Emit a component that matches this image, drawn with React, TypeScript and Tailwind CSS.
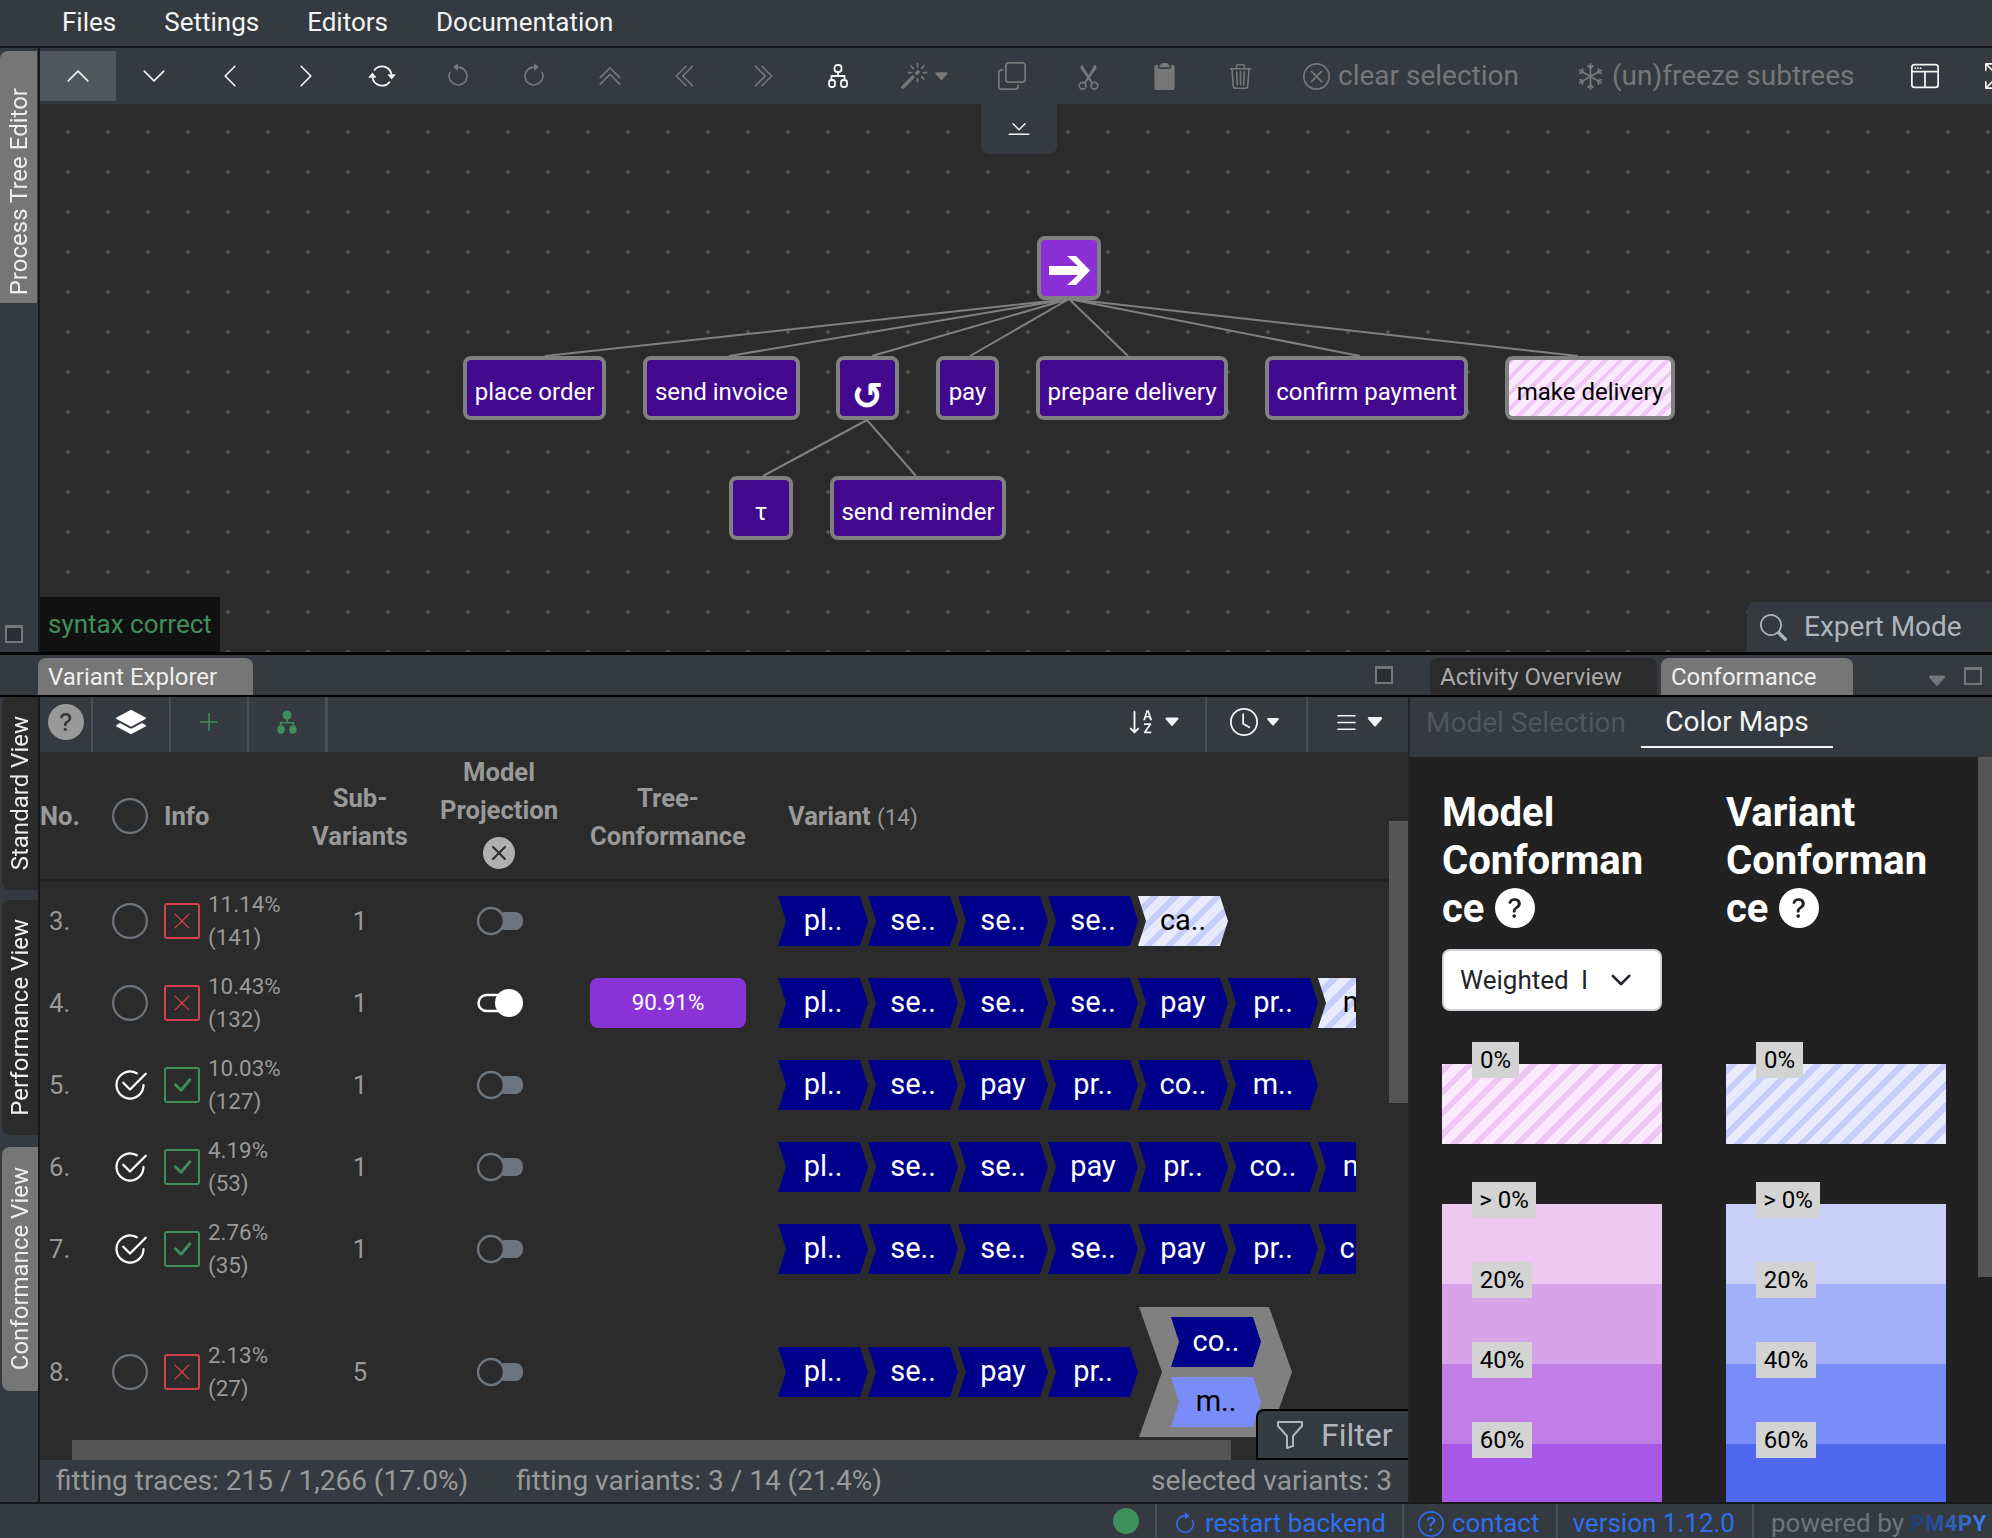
import type { ReactNode } from 'react'
import {
  BsArrowClockwise,
  BsArrowCounterclockwise,
  BsArrowRepeat,
  BsArrowsFullscreen,
  BsCaretDownFill,
  BsCheck2Circle,
  BsCheckLg,
  BsChevronBarDown,
  BsChevronDoubleLeft,
  BsChevronDoubleRight,
  BsChevronDoubleUp,
  BsChevronDown,
  BsChevronLeft,
  BsChevronRight,
  BsChevronUp,
  BsCircle,
  BsClipboard2Fill,
  BsClock,
  BsCopy,
  BsFunnel,
  BsLayersFill,
  BsList,
  BsMagic,
  BsPlusLg,
  BsQuestionCircle,
  BsQuestionLg,
  BsScissors,
  BsSearch,
  BsSnow,
  BsSortAlphaDown,
  BsTrash3,
  BsWindowSplit,
  BsXCircle,
  BsXCircleFill,
  BsXLg,
} from 'react-icons/bs'

const hatchBlue = 'bg-[repeating-linear-gradient(-45deg,#e8ebfd_0px,#e8ebfd_9px,#c5cffa_9px,#c5cffa_15px)]'
const hatchPink = 'bg-[repeating-linear-gradient(-45deg,#fbeafe_0px,#fbeafe_9px,#edc8f2_9px,#edc8f2_15px)]'
const hatchPinkSmall = 'bg-[repeating-linear-gradient(-45deg,#fbeafe_0px,#fbeafe_7px,#edc8f2_7px,#edc8f2_11px)]'

function TreeOutline() {
  return (
    <svg width="20" height="24" viewBox="0 0 20 24" fill="none" stroke="currentColor" strokeWidth="1.8">
      <rect x="6.5" y="1" width="7" height="7" rx="3" />
      <path d="M10 8v4M3.5 15v-3h13v3" />
      <rect x="1" y="16" width="6" height="7" rx="2.5" />
      <rect x="13" y="16" width="6" height="7" rx="2.5" />
    </svg>
  )
}

function TreeFill() {
  return (
    <svg width="20" height="24" viewBox="0 0 20 24" fill="currentColor">
      <circle cx="10" cy="5" r="4.5" />
      <path d="M9.2 8h1.6v4h6.4v3h-1.6v-1.4H4.4V15H2.8v-3h6.4z" />
      <ellipse cx="4" cy="19.5" rx="3.6" ry="4.2" />
      <ellipse cx="16" cy="19.5" rx="3.6" ry="4.2" />
    </svg>
  )
}

function WindowIcon() {
  return <div className="h-[18px] w-[18px] border-2 border-t-[3px] border-[#777777] bg-[#2b2f33]" />
}

function ToolButton({ children, active, dim }: { children: ReactNode; active?: boolean; dim?: boolean }) {
  return (
    <div
      className={`flex h-[50px] w-[76px] shrink-0 items-center justify-center ${active ? 'bg-[#4f565e]' : ''} ${dim ? 'text-[#777777]' : 'text-[#f4f4f4]'}`}
    >
      {children}
    </div>
  )
}

function EditorToolbar() {
  return (
    <div className="flex h-[56px] shrink-0 items-start overflow-hidden bg-[#343a40] pt-[3px]">
      <ToolButton active><BsChevronUp size={26} /></ToolButton>
      <ToolButton><BsChevronDown size={26} /></ToolButton>
      <ToolButton><BsChevronLeft size={26} /></ToolButton>
      <ToolButton><BsChevronRight size={26} /></ToolButton>
      <ToolButton><BsArrowRepeat size={28} /></ToolButton>
      <ToolButton dim><BsArrowCounterclockwise size={26} /></ToolButton>
      <ToolButton dim><BsArrowClockwise size={26} /></ToolButton>
      <ToolButton dim><BsChevronDoubleUp size={26} /></ToolButton>
      <ToolButton dim><BsChevronDoubleLeft size={26} /></ToolButton>
      <ToolButton dim><BsChevronDoubleRight size={26} /></ToolButton>
      <ToolButton><TreeOutline /></ToolButton>
      <div className="flex h-[50px] w-[98px] shrink-0 items-center justify-center gap-[5px] text-[#777777]">
        <BsMagic size={28} />
        <BsCaretDownFill size={17} />
      </div>
      <ToolButton dim><BsCopy size={28} /></ToolButton>
      <ToolButton dim><BsScissors size={27} /></ToolButton>
      <ToolButton dim><BsClipboard2Fill size={27} /></ToolButton>
      <ToolButton dim><BsTrash3 size={25} /></ToolButton>
      <div className="ml-[25px] flex h-[50px] shrink-0 items-center gap-[8px] text-[28px] text-[#777777]">
        <BsXCircle size={27} />
        <span>clear selection</span>
      </div>
      <div className="ml-[58px] flex h-[50px] shrink-0 items-center gap-[8px] text-[28px] text-[#777777]">
        <BsSnow size={27} />
        <span>(un)freeze subtrees</span>
      </div>
      <div className="ml-[56px] flex h-[50px] shrink-0 items-center text-[#f4f4f4]">
        <BsWindowSplit size={28} />
      </div>
      <div className="ml-[46px] flex h-[50px] shrink-0 items-center text-[#f4f4f4]">
        <BsArrowsFullscreen size={26} />
      </div>
    </div>
  )
}

const nodes = [
  { label: 'place order', cls: 'left-[423px] top-[252px] w-[143px]' },
  { label: 'send invoice', cls: 'left-[603px] top-[252px] w-[157px]' },
  { label: 'pay', cls: 'left-[896px] top-[252px] w-[63px]' },
  { label: 'prepare delivery', cls: 'left-[996px] top-[252px] w-[192px]' },
  { label: 'confirm payment', cls: 'left-[1225px] top-[252px] w-[203px]' },
  { label: 'τ', cls: 'left-[689px] top-[372px] w-[64px]' },
  { label: 'send reminder', cls: 'left-[790px] top-[372px] w-[176px]' },
]

function TreeCanvas() {
  return (
    <div className="relative flex-1 overflow-hidden bg-[#2b2b2b] bg-[radial-gradient(circle,#4f565e_1.5px,transparent_2.2px)] bg-[length:40px_40px] bg-[position:8px_8px]">
      <svg className="absolute left-0 top-0" width="1952" height="548" stroke="#808080" strokeWidth="2" fill="none">
        <path d="M1029 195L505 252M1029 195L689 252M1029 195L832 252M1029 195L930 252M1029 195L1088 252M1029 195L1320 252M1029 195L1538 252" />
        <path d="M827 316L723 372M827 316L876 372" />
      </svg>
      <div className="absolute left-[997px] top-[132px] flex h-[64px] w-[64px] items-center justify-center rounded-lg border-[4px] border-[#808080] bg-[#8a2fd3] pt-[4px] text-white">
        <svg width="41" height="29" viewBox="0 0 41 29" fill="currentColor">
          <path d="M0 10H29L18 0H27L41 14.5L27 29H18L29 19H0Z" />
        </svg>
      </div>
      {nodes.map((n) => (
        <div
          key={n.label}
          className={`absolute flex h-[64px] items-center justify-center rounded-lg border-[4px] border-[#808080] bg-[#42088e] pt-[7px] text-[24px] whitespace-nowrap text-white ${n.cls}`}
        >
          {n.label}
        </div>
      ))}
      <div className="absolute left-[796px] top-[252px] flex h-[64px] w-[63px] items-center justify-center rounded-lg border-[4px] border-[#808080] bg-[#42088e] pt-[15px] font-['DejaVu_Sans',sans-serif] text-[38px] leading-none font-bold text-white">
        ↺
      </div>
      <div
        className={`absolute left-[1465px] top-[252px] flex h-[64px] w-[170px] items-center justify-center rounded-lg border-[4px] border-[#808080] pt-[7px] text-[24px] whitespace-nowrap text-black ${hatchPinkSmall}`}
      >
        make delivery
      </div>

      <div className="absolute left-[941px] top-0 flex h-[50px] w-[76px] items-center justify-center rounded-b-lg bg-[#343a40] text-[#f4f4f4]">
        <BsChevronBarDown size={24} />
      </div>
      <div className="absolute bottom-0 left-0 flex h-[55px] w-[180px] items-center bg-[#111111] pl-[8px] text-[26px] text-[#3f8f5b]">
        syntax correct
      </div>
      <div className="absolute bottom-0 right-0 flex h-[50px] w-[245px] items-center gap-[17px] rounded-tl-lg bg-[#343a40] pl-[13px] text-[28px] text-[#adb5bd]">
        <BsSearch size={27} />
        <span>Expert Mode</span>
      </div>
    </div>
  )
}

function SideTab({ label, active, cls }: { label: string; active?: boolean; cls: string }) {
  return (
    <div
      className={`flex w-[36px] items-center justify-center rounded-tl-lg rounded-bl-lg ${active ? 'bg-[#777676]' : 'bg-[#2b2b2b]'} ${cls}`}
    >
      <span className="rotate-180 text-[24px] whitespace-nowrap text-[#eeeeee] [writing-mode:vertical-rl]">{label}</span>
    </div>
  )
}

type Cell = 'dark' | 'hatch' | 'light'

function Chevron({ label, kind = 'dark' }: { label: string; kind?: Cell }) {
  const look =
    kind === 'hatch'
      ? `${hatchBlue} text-black`
      : kind === 'light'
        ? 'bg-[#7a8cf7] text-black'
        : 'bg-[#00008b] text-white'
  return (
    <div
      className={`flex h-[50px] w-[90px] shrink-0 items-center justify-center text-[29px] [clip-path:polygon(0_0,82px_0,90px_25px,82px_50px,0_50px,8px_25px)] ${look}`}
    >
      {label}
    </div>
  )
}

function Toggle({ on }: { on?: boolean }) {
  if (on) {
    return (
      <svg width="46" height="30" viewBox="0 0 46 30" fill="none">
        <rect x="1.5" y="7" width="28" height="16" rx="8" stroke="#ffffff" strokeWidth="2.5" />
        <circle cx="32" cy="15" r="14" fill="#ffffff" />
      </svg>
    )
  }
  return (
    <svg width="46" height="30" viewBox="0 0 46 30" fill="none">
      <rect x="20" y="6" width="26" height="18" rx="8" fill="#6c757d" />
      <circle cx="14" cy="15" r="13" fill="#2b2b2b" stroke="#6c757d" strokeWidth="2.5" />
    </svg>
  )
}

const rowGrid = 'grid grid-cols-[72px_52px_132px_128px_150px_188px_1fr] items-center'

const rows = [
  { no: '3.', sel: false, fit: false, pct: '11.14%', cnt: '(141)', sub: '1', on: false, cells: ['pl..', 'se..', 'se..', 'se..', 'ca..'], hatch: 4 },
  { no: '4.', sel: false, fit: false, pct: '10.43%', cnt: '(132)', sub: '1', on: true, tree: '90.91%', cells: ['pl..', 'se..', 'se..', 'se..', 'pay', 'pr..', 'm..'], hatch: 6 },
  { no: '5.', sel: true, fit: true, pct: '10.03%', cnt: '(127)', sub: '1', on: false, cells: ['pl..', 'se..', 'pay', 'pr..', 'co..', 'm..'] },
  { no: '6.', sel: true, fit: true, pct: '4.19%', cnt: '(53)', sub: '1', on: false, cells: ['pl..', 'se..', 'se..', 'pay', 'pr..', 'co..', 'm..'] },
  { no: '7.', sel: true, fit: true, pct: '2.76%', cnt: '(35)', sub: '1', on: false, cells: ['pl..', 'se..', 'se..', 'se..', 'pay', 'pr..', 'co..'] },
]

function SelectCircle({ on }: { on: boolean }) {
  return (
    <div className={`flex justify-start ${on ? 'text-white' : 'text-[#6c757d]'}`}>
      {on ? <BsCheck2Circle size={36} /> : <BsCircle size={36} />}
    </div>
  )
}

function InfoCell({ fit, pct, cnt }: { fit: boolean; pct: string; cnt: string }) {
  return (
    <div className="flex items-center gap-[8px]">
      <div
        className={`flex h-[36px] w-[36px] items-center justify-center rounded-[3px] border-2 ${fit ? 'border-[#3f8f5b] text-[#3f8f5b]' : 'border-[#d1404d] text-[#d1404d]'}`}
      >
        {fit ? <BsCheckLg size={24} stroke="currentColor" strokeWidth={0.6} /> : <BsXLg size={20} />}
      </div>
      <div className="text-[22.4px] leading-[33px] text-[#999999]">
        <div>{pct}</div>
        <div>{cnt}</div>
      </div>
    </div>
  )
}

function VariantExplorer() {
  return (
    <div className="relative flex w-[1368px] shrink-0 flex-col">
      <div className="flex h-[55px] shrink-0 items-stretch bg-[#343a40] pl-[8px]">
        <div className="flex w-[45px] items-center border-r-2 border-[#4a5056] pb-[5px]">
          <div className="flex h-[36px] w-[36px] items-center justify-center rounded-full bg-[#999999] text-[#343a40]">
            <BsQuestionLg size={24} />
          </div>
        </div>
        <div className="flex w-[78px] items-center justify-center border-r-2 border-[#4a5056] pb-[5px] text-white">
          <BsLayersFill size={30} />
        </div>
        <div className="flex w-[78px] items-center justify-center border-r-2 border-[#4a5056] pb-[5px] text-[#3f8f5b]">
          <BsPlusLg size={24} />
        </div>
        <div className="flex w-[79px] items-center justify-center border-r-[3px] border-[#4a5056] pb-[5px] text-[#3f8f5b]">
          <TreeFill />
        </div>
        <div className="ml-auto flex items-center gap-[6px] border-r-2 border-[#4a5056] pb-[5px] pr-[24px] text-[#f4f4f4]">
          <BsSortAlphaDown size={30} />
          <BsCaretDownFill size={18} />
        </div>
        <div className="flex items-center gap-[7px] border-r-2 border-[#4a5056] pb-[5px] pl-[23px] pr-[25px] text-[#f4f4f4]">
          <BsClock size={28} />
          <BsCaretDownFill size={16} />
        </div>
        <div className="flex items-center gap-[5px] pb-[5px] pl-[25px] pr-[23px] text-[#f4f4f4]">
          <BsList size={27} />
          <BsCaretDownFill size={20} />
        </div>
      </div>

      <div className="flex min-h-0 flex-1 bg-[#2b2b2b]">
        <div className="min-w-0 flex-1 overflow-hidden">
          <div className={`${rowGrid} h-[130px] border-b-[3px] border-[#212121] text-[25.6px] leading-[38px] font-bold text-[#999999]`}>
            <div>No.</div>
            <div className="flex justify-start text-[#6c757d]"><BsCircle size={36} /></div>
            <div>Info</div>
            <div className="pt-[2px] text-center">Sub-<br />Variants</div>
            <div className="flex flex-col items-center pb-[9px]">
              <span>Model</span>
              <span>Projection</span>
              <BsXCircleFill size={32} className="mt-[8px] text-[#b0b0b0]" />
            </div>
            <div className="pt-[2px] text-center">Tree-<br />Conformance</div>
            <div className="pl-[26px] pt-[2px]">
              Variant <span className="text-[22.4px] font-normal">(14)</span>
            </div>
          </div>

          <div className="-mt-[2px] h-[560px] overflow-hidden">
            {rows.map((r) => (
              <div key={r.no} className={`${rowGrid} h-[82px]`}>
                <div className="pl-[9px] text-[25.6px] text-[#999999]">{r.no}</div>
                <SelectCircle on={r.sel} />
                <InfoCell fit={r.fit} pct={r.pct} cnt={r.cnt} />
                <div className="text-center text-[25.6px] text-[#999999]">{r.sub}</div>
                <div className="flex justify-center pl-[2px]"><Toggle on={r.on} /></div>
                <div className="flex justify-center">
                  {r.tree && (
                    <div className="flex h-[50px] w-[156px] items-center justify-center rounded-lg bg-[#8a33d6] text-[22.4px] text-white">
                      {r.tree}
                    </div>
                  )}
                </div>
                <div className="ml-[16px] flex w-[578px] overflow-hidden">
                  {r.cells.map((c, i) => (
                    <Chevron key={i} label={c} kind={i === r.hatch ? 'hatch' : 'dark'} />
                  ))}
                </div>
              </div>
            ))}

            <div className={`${rowGrid} h-[164px]`}>
              <div className="pl-[9px] text-[25.6px] text-[#999999]">8.</div>
              <SelectCircle on={false} />
              <InfoCell fit={false} pct="2.13%" cnt="(27)" />
              <div className="text-center text-[25.6px] text-[#999999]">5</div>
              <div className="flex justify-center pl-[2px]"><Toggle /></div>
              <div />
              <div className="ml-[16px] flex items-center">
                <Chevron label="pl.." />
                <Chevron label="se.." />
                <Chevron label="pay" />
                <Chevron label="pr.." />
                <div className="ml-px flex h-[130px] w-[153px] shrink-0 flex-col gap-[10px] bg-[#808080] py-[10px] pl-[32px] [clip-path:polygon(0_0,130px_0,153px_65px,130px_130px,0_130px,23px_65px)]">
                  <Chevron label="co.." />
                  <Chevron label="m.." kind="light" />
                </div>
              </div>
            </div>
          </div>
        </div>
        <div className="w-[19px] shrink-0 pt-[69px]">
          <div className="h-[282px] bg-[#555555]" />
        </div>
      </div>

      <div className="h-[20px] shrink-0 bg-[#2b2b2b] pl-[32px]">
        <div className="h-full w-[1159px] bg-[#555555]" />
      </div>
      <div className="flex h-[42px] shrink-0 items-center bg-[#343a40] pl-[16px] pr-[16px] text-[28px] whitespace-nowrap text-[#999999]">
        <span>fitting traces: 215 / 1,266 (17.0%)</span>
        <span className="ml-[48px]">fitting variants: 3 / 14 (21.4%)</span>
        <span className="ml-auto">selected variants: 3</span>
      </div>

      <div className="absolute bottom-[42px] right-0 flex h-[51px] w-[152px] items-center gap-[15px] rounded-tl-lg border-2 border-r-0 border-black bg-[#343a40] pl-[16px] text-[32px] text-[#adb5bd]">
        <BsFunnel size={32} />
        <span>Filter</span>
      </div>
    </div>
  )
}

function Label({ text, cls }: { text: string; cls: string }) {
  return (
    <div className={`absolute -top-[22px] left-[30px] flex h-[36px] items-center justify-center bg-[#d3d3d3] text-[24px] whitespace-nowrap text-black ${cls}`}>
      {text}
    </div>
  )
}

function Scale({ stripes, bands }: { stripes: string; bands: string[] }) {
  const labels = ['> 0%', '20%', '40%', '60%', '80%']
  return (
    <div>
      <div className={`relative mt-[53px] h-[80px] ${stripes}`}>
        <Label text="0%" cls="w-[47px]" />
      </div>
      <div className="mt-[60px]">
        {bands.map((b, i) => (
          <div key={b} className={`relative h-[80px] ${b}`}>
            <Label text={labels[i]} cls={i === 0 ? 'w-[64px]' : 'w-[60px]'} />
          </div>
        ))}
      </div>
    </div>
  )
}

function Heading({ first }: { first: string }) {
  return (
    <div className="text-[40px] leading-[48px] font-bold text-white">
      {first}
      <br />
      Conforman
      <br />
      ce
      <span className="ml-[11px] inline-flex h-[40px] w-[40px] items-center justify-center rounded-full bg-white align-[1px] text-[#212121]">
        <BsQuestionLg size={26} />
      </span>
    </div>
  )
}

function ConformancePanel() {
  return (
    <div className="flex min-w-0 flex-1 flex-col overflow-hidden border-l-2 border-[#212529]">
      <div className="flex h-[60px] shrink-0 items-start bg-[#343a40]">
        <div className="flex h-[51px] w-[231px] shrink-0 items-center pl-[16px] text-[28px] whitespace-nowrap text-[#4f565e]">
          Model Selection
        </div>
        <div className="flex h-[51px] w-[192px] shrink-0 items-center justify-center border-b-2 border-[#f4f4f4] text-[28px] text-[#f4f4f4]">
          Color Maps
        </div>
      </div>
      <div className="flex min-h-0 flex-1">
        <div className="min-w-0 flex-1 overflow-hidden bg-[#212121] pl-[32px] pt-[32px]">
          <div className="grid grid-cols-[220px_220px] gap-x-[64px]">
            <Heading first="Model" />
            <Heading first="Variant" />
            <div className="mt-[16px] flex h-[62px] items-center rounded-lg border-2 border-[#ced4da] bg-white pl-[16px] text-[26px] text-[#212529]">
              <span className="w-[130px] overflow-hidden whitespace-nowrap [word-spacing:6px]">Weighted I</span>
              <BsChevronDown size={22} className="ml-[20px] [&_path]:stroke-current [&_path]:stroke-1" />
            </div>
            <div />
            <Scale stripes={hatchPink} bands={['bg-[#eec8f0]', 'bg-[#d8a4e8]', 'bg-[#c07ee6]', 'bg-[#a858e6]', 'bg-[#9038e0]']} />
            <Scale stripes={hatchBlue} bands={['bg-[#c8d0fa]', 'bg-[#a3aff8]', 'bg-[#7a8cf7]', 'bg-[#5068f0]', 'bg-[#3040e0]']} />
          </div>
        </div>
        <div className="w-[14px] shrink-0 bg-[#212121]">
          <div className="h-[520px] bg-[#555555]" />
        </div>
      </div>
    </div>
  )
}

function Footer() {
  return (
    <div className="flex h-[36px] shrink-0 items-center justify-end border-t-2 border-[#16181a] bg-[#343a40] text-[26px] whitespace-nowrap text-[#2f6fed]">
      <div className="flex h-full items-center border-r-2 border-[#4a5056] pr-[16px]">
        <div className="h-[26px] w-[26px] rounded-full bg-[#3f8f5b]" />
      </div>
      <div className="flex h-full items-center gap-[8px] border-r-2 border-[#4a5056] pl-[16px] pr-[16px] pt-[5px]">
        <BsArrowClockwise size={24} />
        <span>restart backend</span>
      </div>
      <div className="flex h-full items-center gap-[8px] border-r-2 border-[#4a5056] pl-[14px] pr-[17px] pt-[5px]">
        <BsQuestionCircle size={26} />
        <span>contact</span>
      </div>
      <div className="flex h-full items-center border-r-2 border-[#4a5056] pl-[14px] pr-[17px] pt-[5px]">version 1.12.0</div>
      <div className="flex h-full w-[238px] items-center overflow-hidden pl-[17px] pt-[5px] text-[#6c757d]">
        <span>powered by</span>
        <span className="ml-[6px] bg-linear-to-r from-[#1f3a7a] to-[#3b82f6] bg-clip-text text-[22px] font-bold tracking-wide text-transparent">
          PM4PY
        </span>
      </div>
    </div>
  )
}

export default function App() {
  return (
    <div className="flex h-[1538px] w-[1992px] flex-col overflow-hidden bg-[#343a40] font-['Roboto',sans-serif]">
      <div className="flex h-[48px] shrink-0 items-center gap-[48px] border-b-2 border-[#16181a] pb-[2px] pl-[62px] text-[26px] text-[#f4f4f4]">
        <span>Files</span>
        <span>Settings</span>
        <span>Editors</span>
        <span>Documentation</span>
      </div>

      <div className="flex h-[604px] shrink-0">
        <div className="relative w-[40px] shrink-0 border-r-2 border-[#16181a] pt-[3px]">
          <div className="flex h-[252px] w-[37px] items-end justify-center rounded-tl-lg bg-[#777676] pb-[8px]">
            <span className="rotate-180 text-[24px] whitespace-nowrap text-[#eeeeee] [writing-mode:vertical-rl]">Process Tree Editor</span>
          </div>
          <div className="absolute bottom-[9px] left-[5px]"><WindowIcon /></div>
        </div>
        <div className="flex min-w-0 flex-1 flex-col">
          <EditorToolbar />
          <TreeCanvas />
        </div>
      </div>

      <div className="h-[3px] shrink-0 bg-black" />

      <div className="flex h-[42px] shrink-0 items-end border-b-2 border-black pl-[38px]">
        <div className="flex h-[37px] w-[215px] items-center rounded-t-lg bg-[#777676] pl-[10px] text-[24px] text-[#eeeeee]">Variant Explorer</div>
        <div className="mb-[11px] ml-[1122px]"><WindowIcon /></div>
        <div className="ml-[37px] flex h-[37px] w-[227px] items-center rounded-t-lg bg-[#2b2b2b] pl-[10px] text-[24px] text-[#aaaaaa]">Activity Overview</div>
        <div className="ml-[4px] flex h-[37px] w-[192px] items-center rounded-t-lg bg-[#777676] pl-[10px] text-[24px] text-[#eeeeee]">Conformance</div>
        <div className="mb-[3px] ml-[73px] text-[#777777]"><BsCaretDownFill size={22} /></div>
        <div className="mb-[10px] ml-[16px] h-[18px] w-[18px] border-2 border-t-[3px] border-[#777777]" />
      </div>

      <div className="flex h-[805px] shrink-0">
        <div className="flex w-[40px] shrink-0 flex-col border-r-2 border-[#16181a] pl-[2px]">
          <SideTab label="Standard View" cls="h-[193px]" />
          <SideTab label="Performance View" cls="mt-[10px] h-[235px]" />
          <SideTab label="Conformance View" active cls="mt-[12px] h-[244px]" />
        </div>
        <VariantExplorer />
        <ConformancePanel />
      </div>

      <Footer />
    </div>
  )
}
